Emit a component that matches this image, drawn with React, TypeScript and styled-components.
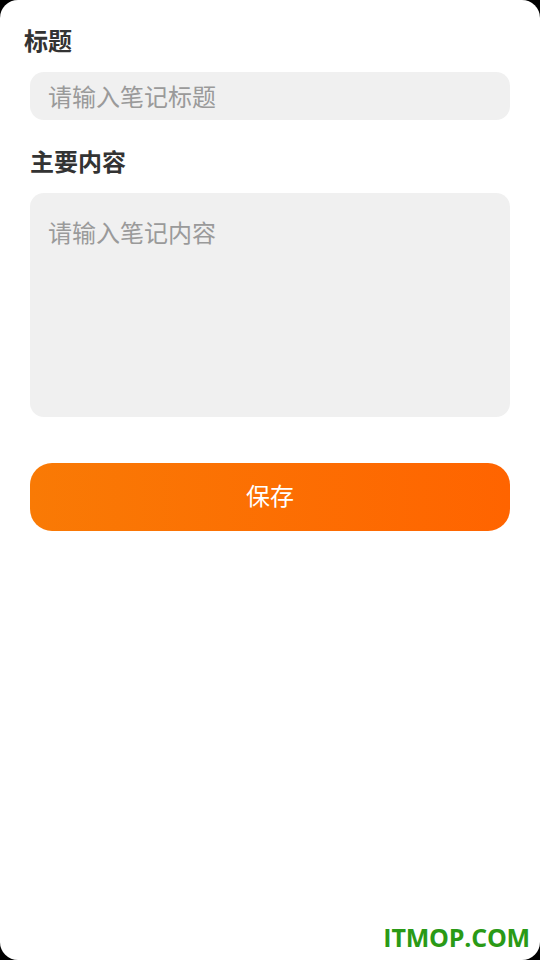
import React from "react";
import styled, { createGlobalStyle } from "styled-components";

const Global = createGlobalStyle`
  html, body {
    margin: 0;
    padding: 0;
    background: #000;
  }
  * { box-sizing: border-box; }
  body {
    font-family: "Noto Sans CJK SC", "Noto Sans", sans-serif;
  }
`;

const Screen = styled.div`
  position: relative;
  width: 540px;
  min-height: 960px;
  background: #fff;
  border-radius: 18px;
  overflow: hidden;
  padding: 23px 30px 0;
  display: flex;
  flex-direction: column;
`;

const Label = styled.div<{ $shift?: number; $gap: number }>`
  font-size: 24px;
  line-height: 34px;
  font-weight: 700;
  color: #333;
  margin-left: ${(p) => p.$shift ?? 0}px;
  margin-bottom: ${(p) => p.$gap}px;
`;

const Field = styled.div<{ $height: number; $multi?: boolean }>`
  height: ${(p) => p.$height}px;
  background: #f0f0f0;
  border-radius: 14px;
  padding: ${(p) => (p.$multi ? "22px 18px" : "0 18px 1px")};
  display: flex;
  align-items: ${(p) => (p.$multi ? "flex-start" : "center")};
  font-size: 24px;
  line-height: 34px;
  color: #9a9a9a;
`;

const Spacer = styled.div<{ $h: number }>`
  height: ${(p) => p.$h}px;
  flex: none;
`;

const SaveButton = styled.button`
  height: 68px;
  width: 100%;
  border: none;
  border-radius: 22px;
  background: linear-gradient(90deg, #f97a05 0%, #ff6400 100%);
  color: #fff;
  font-family: "Noto Sans CJK SC", "Noto Sans", sans-serif;
  font-size: 24px;
  line-height: 34px;
  display: flex;
  align-items: center;
  justify-content: center;
  padding: 0 0 4px;
`;

const Watermark = styled.div`
  position: absolute;
  right: 10px;
  bottom: 8px;
  font-family: "Open Sans", "Noto Sans", sans-serif;
  font-weight: 700;
  font-size: 25px;
  line-height: 30px;
  color: #2a9a16;
  letter-spacing: -0.2px;
`;

export default function App() {
  return (
    <>
      <Global />
      <Screen>
        <Label $shift={-6} $gap={15}>标题</Label>
        <Field $height={48}>请输入笔记标题</Field>
        <Spacer $h={24} />
        <Label $gap={15}>主要内容</Label>
        <Field $height={224} $multi>请输入笔记内容</Field>
        <Spacer $h={46} />
        <SaveButton>保存</SaveButton>
        <Watermark>ITMOP.COM</Watermark>
      </Screen>
    </>
  );
}
